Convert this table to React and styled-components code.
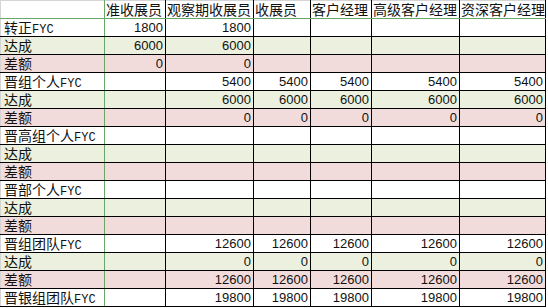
import React from 'react'
import styled, { createGlobalStyle } from 'styled-components'

const GlobalStyle = createGlobalStyle`
  html, body {
    margin: 0;
    padding: 0;
    background: #ffffff;
  }
`;

const COLUMNS = ['准收展员', '观察期收展员', '收展员', '客户经理', '高级客户经理', '资深客户经理'];
const WIDTHS = [104, 61, 88, 57, 61, 88, 86];

const ROWS = [
  { label: '转正', fyc: true, kind: 'base', values: [1800, 1800, '', '', '', ''] },
  { label: '达成', kind: 'reach', values: [6000, 6000, '', '', '', ''] },
  { label: '差额', kind: 'gap', values: [0, 0, '', '', '', ''] },
  { label: '晋组个人', fyc: true, kind: 'base', values: ['', 5400, 5400, 5400, 5400, 5400] },
  { label: '达成', kind: 'reach', values: ['', 6000, 6000, 6000, 6000, 6000] },
  { label: '差额', kind: 'gap', values: ['', 0, 0, 0, 0, 0] },
  { label: '晋高组个人', fyc: true, kind: 'base', values: ['', '', '', '', '', ''] },
  { label: '达成', kind: 'reach', values: ['', '', '', '', '', ''] },
  { label: '差额', kind: 'gap', values: ['', '', '', '', '', ''] },
  { label: '晋部个人', fyc: true, kind: 'base', values: ['', '', '', '', '', ''] },
  { label: '达成', kind: 'reach', values: ['', '', '', '', '', ''] },
  { label: '差额', kind: 'gap', values: ['', '', '', '', '', ''] },
  { label: '晋组团队', fyc: true, kind: 'base', values: ['', 12600, 12600, 12600, 12600, 12600] },
  { label: '达成', kind: 'reach', values: ['', 0, 0, 0, 0, 0] },
  { label: '差额', kind: 'gap', values: ['', 12600, 12600, 12600, 12600, 12600] },
  { label: '晋银组团队', fyc: true, kind: 'base', values: ['', 19800, 19800, 19800, 19800, 19800] },
];

const FILLS = {
  base: '#ffffff',
  reach: '#ebf1de',
  gap: '#f2dcdb',
};

function Sheet() {
  return (
    <>
      <GlobalStyle />
      <Grid>
        <colgroup>
          {WIDTHS.map((w, i) => (
            <col key={i} style={{ width: w }} />
          ))}
        </colgroup>
        <thead>
          <tr>
            <Corner><Text /></Corner>
            {COLUMNS.map((c) => (
              <HeadCell key={c}><Text>{c}</Text></HeadCell>
            ))}
          </tr>
        </thead>
        <tbody>
          {ROWS.map((row, r) => (
            <Row key={r} $kind={row.kind}>
              <LabelCell>
                <Text>
                  {row.label}
                  {row.fyc && <Latin>FYC</Latin>}
                </Text>
              </LabelCell>
              {row.values.map((v, i) => (
                <NumCell key={i}><Text>{v}</Text></NumCell>
              ))}
            </Row>
          ))}
        </tbody>
      </Grid>
    </>
  )
}

export default Sheet


const Grid = styled.table`
  border-collapse: collapse;
  table-layout: fixed;
  width: 546px;
  font-family: "Noto Sans CJK SC", "Liberation Sans", sans-serif;
  color: #111111;
`;

const Text = styled.div`
  height: 17px;
  line-height: 17px;
  overflow: hidden;
  white-space: nowrap;
`;

const Cell = styled.td`
  padding: 0;
  border: 1px solid #000000;
  overflow: hidden;
`;

const Corner = styled.th`
  padding: 0;
  border-left: 1px solid #d4d4d4;
  border-top: 1px solid #d4d4d4;
  border-right: 1px solid #6aa66a;
  border-bottom: 1px solid #6aa66a;
`;

const HeadCell = styled.th`
  padding: 0 0 0 1px;
  text-align: left;
  font-weight: normal;
  font-size: 14px;
  overflow: hidden;
  border-left: 1px solid #000000;
  border-right: 1px solid #000000;
  border-top: 1px solid #d4d4d4;
  border-bottom: 1px solid #6aa66a;
`;

const Row = styled.tr`
  background: ${(p) => FILLS[p.$kind]};
`;

const LabelCell = styled(Cell)`
  font-size: 14px;
  padding-left: 3px;
  border-left: 1px solid #d4d4d4;
  border-right: 1px solid #6aa66a;
`;

const Latin = styled.span`
  font-family: "Liberation Mono", monospace;
  font-size: 12px;
`;

const NumCell = styled(Cell)`
  text-align: right;
  padding-right: 2px;
  font-family: "Liberation Sans", sans-serif;
  font-size: 13px;
`;
